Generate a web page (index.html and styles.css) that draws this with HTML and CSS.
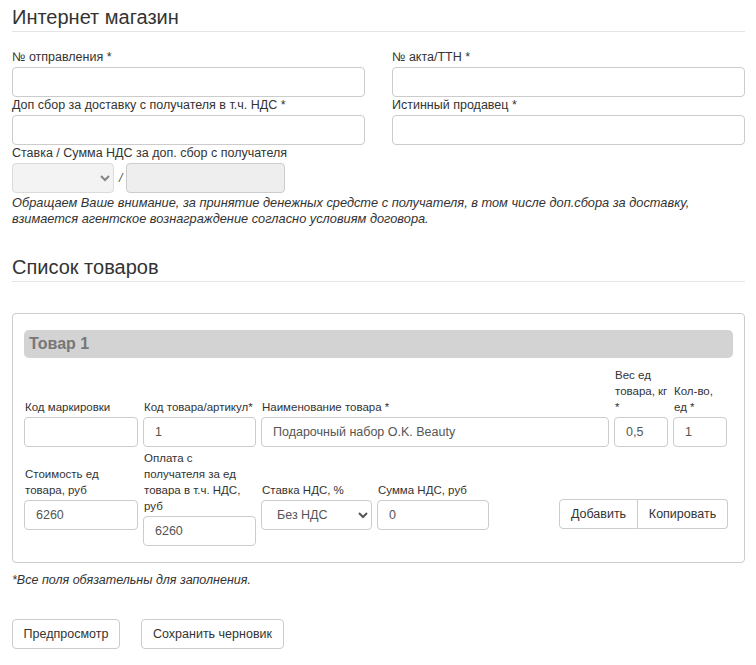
FILE: index.html
```html
<!DOCTYPE html>
<html lang="ru">
<head>
<meta charset="utf-8">
<link rel="stylesheet" href="styles.css">
</head>
<body>
<div class="page">
  <h2 class="section-title">Интернет магазин</h2>
  <div class="top-grid">
    <div class="col">
      <label class="lbl">№ отправления *</label>
      <input class="ctl" type="text">
      <label class="lbl">Доп сбор за доставку с получателя в т.ч. НДС *</label>
      <input class="ctl" type="text">
      <label class="lbl">Ставка / Сумма НДС за доп. сбор с получателя</label>
      <div class="vat-line">
        <select class="ctl sel sel-small" disabled><option></option></select>
        <span class="slash">/</span>
        <input class="ctl vat-sum" type="text" disabled>
      </div>
    </div>
    <div class="col">
      <label class="lbl">№ акта/ТТН *</label>
      <input class="ctl" type="text">
      <label class="lbl">Истинный продавец *</label>
      <input class="ctl" type="text">
    </div>
  </div>
  <p class="note">Обращаем Ваше внимание, за принятие денежных средсте с получателя, в том числе доп.сбора за доставку, взимается агентское вознаграждение согласно условиям договора.</p>

  <h2 class="section-title list-title">Список товаров</h2>

  <div class="card">
    <div class="card-head">Товар 1</div>
    <div class="row row-1">
      <div class="fld w114"><label class="lbl">Код маркировки</label><input class="ctl" type="text"></div>
      <div class="fld w113"><label class="lbl">Код товара/артикул*</label><input class="ctl" type="text" value="1"></div>
      <div class="fld w348"><label class="lbl">Наименование товара *</label><input class="ctl" type="text" value="Подарочный набор O.K. Beauty"></div>
      <div class="fld w54"><label class="lbl">Вес ед товара, кг *</label><input class="ctl" type="text" value="0,5"></div>
      <div class="fld w54"><label class="lbl">Кол-во, ед *</label><input class="ctl" type="text" value="1"></div>
    </div>
    <div class="row row-2">
      <div class="fld w114"><label class="lbl lbl2">Стоимость ед товара, руб</label><input class="ctl" type="text" value="6260"></div>
      <div class="fld w113"><label class="lbl">Оплата с получателя за ед товара в т.ч. НДС, руб</label><input class="ctl" type="text" value="6260"></div>
      <div class="fld w111"><label class="lbl lbl2">Ставка НДС, %</label><select class="ctl sel"><option>Без НДС</option></select></div>
      <div class="fld w112"><label class="lbl lbl2">Сумма НДС, руб</label><input class="ctl" type="text" value="0"></div>
      <div class="btn-group">
        <button class="btn btn-left" type="button">Добавить</button><button class="btn btn-right" type="button">Копировать</button>
      </div>
    </div>
  </div>

  <p class="req">*Все поля обязательны для заполнения.</p>

  <div class="actions">
    <button class="btn btn-preview" type="button">Предпросмотр</button>
    <button class="btn btn-draft" type="button">Сохранить черновик</button>
  </div>
</div>
</body>
</html>
```

FILE: styles.css
```css
* { box-sizing: border-box; }
html, body { margin: 0; padding: 0; background: #fff; }
body {
  font-family: "Liberation Sans", Arial, sans-serif;
  font-size: 12.5px;
  line-height: 16px;
  color: #333;
}
.page { width: 733px; margin-left: 12px; padding-top: 6px; }

.section-title {
  margin: 0;
  font-size: 20px;
  font-weight: normal;
  line-height: 22px;
  padding-bottom: 3px;
  border-bottom: 1px solid #e5e5e5;
  color: #333;
}

.top-grid {
  display: grid;
  grid-template-columns: 353px 353px;
  column-gap: 27px;
  margin-top: 17px;
}
.col { display: flex; flex-direction: column; }

.lbl { display: block; margin-bottom: 2px; }

.ctl {
  display: block;
  width: 100%;
  height: 30px;
  border: 1px solid #ccc;
  border-radius: 4px;
  padding: 4px 11px;
  font-family: "Liberation Sans", Arial, sans-serif;
  font-size: 12.5px;
  color: #555;
  background: #fff;
  margin: 0;
}
.sel { padding: 4px 8px 4px 11px; }

.vat-line { display: flex; align-items: center; }
.sel-small { width: 102px; background: #eee; }
.slash { margin: 0 4px 0 5px; color: #555; font-style: italic; }
.vat-sum { width: 159px; background: #eee; }

.note {
  margin: 2px 0 0;
  max-width: 718px;
  font-size: 12.8px;
  font-style: italic;
  line-height: 16px;
}

.list-title { margin-top: 29px; }

.card {
  margin-top: 31px;
  border: 1px solid #ccc;
  border-radius: 4px;
  padding: 16px 11px 16px 11px;
}
.card-head {
  background: #d3d3d3;
  border-radius: 5px;
  height: 28px;
  line-height: 28px;
  padding-left: 5px;
  font-size: 16px;
  font-weight: bold;
  color: #777;
}

.row { display: flex; column-gap: 5px; padding-right: 5px; }
.row-1 { align-items: flex-end; margin-top: 9px; }
.row-2 { align-items: center; margin-top: 3px; }

.fld { display: flex; flex-direction: column; }
.fld .lbl { padding-left: 1px; font-size: 11.5px; line-height: 16px; }
.lbl2 { min-height: 32px; display: flex; align-items: flex-end; }
.w114 { width: 114px; }
.w113 { width: 113px; }
.w348 { width: 348px; }
.w54 { width: 54px; }
.w111 { width: 111px; }
.w112 { width: 112px; }

.btn {
  font-family: "Liberation Sans", Arial, sans-serif;
  font-size: 12.5px;
  color: #333;
  background: #fff;
  border: 1px solid #ccc;
  border-radius: 4px;
  height: 30px;
  padding: 0;
  white-space: nowrap;
  cursor: pointer;
}
.btn-group { margin-left: auto; margin-top: 31px; display: flex; }
.btn-left { border-radius: 4px 0 0 4px; width: 79px; }
.btn-right { border-radius: 0 4px 4px 0; border-left: 0; width: 90px; }

.req { margin: 9px 0 0; font-style: italic; }

.actions { margin-top: 31px; display: flex; column-gap: 21px; }
.btn-preview { width: 108px; }
.btn-draft { width: 143px; }
```
